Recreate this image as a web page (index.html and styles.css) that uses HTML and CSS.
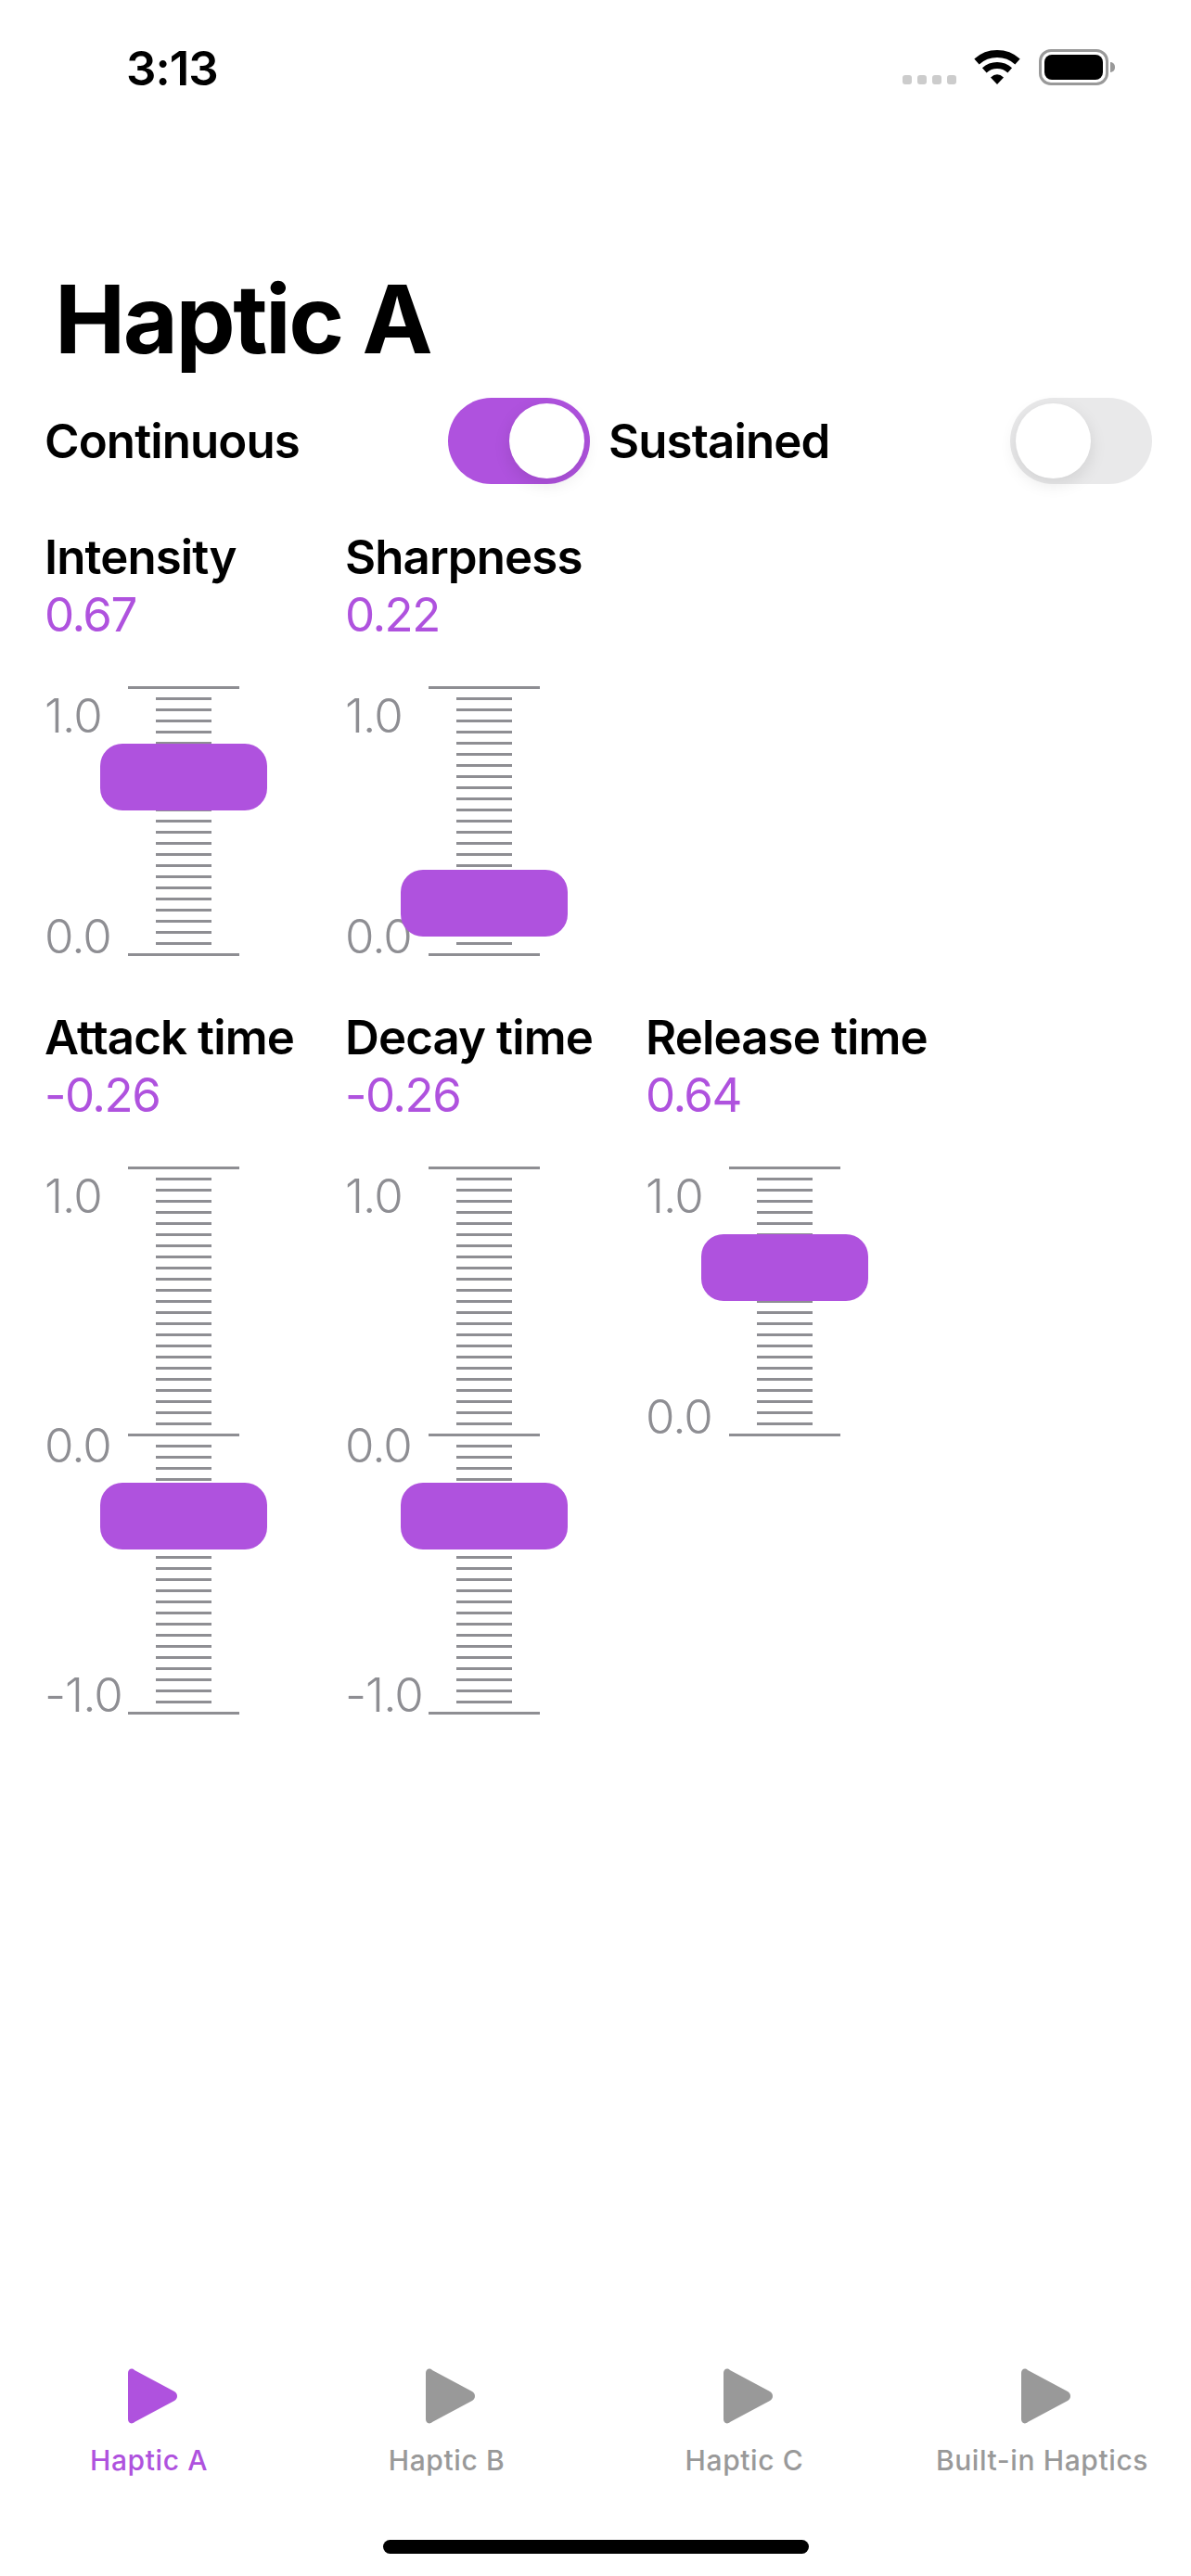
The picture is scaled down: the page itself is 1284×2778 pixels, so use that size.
FILE: index.html
```html
<!DOCTYPE html>
<html lang="en">
<head>
    <meta charset="UTF-8">
    <title>Haptic A</title>
    <link rel="stylesheet" href="styles.css">
</head>
<body>
    <div class="app">
        <div class="status-bar">
            <span class="time">3:13</span>
            <div class="status-icons">
                <div class="signal"><i></i><i></i><i></i><i></i></div>
                <svg class="wifi" width="50" height="37" viewBox="0 0 50 37">
                    <path d="M3 12.5A33 33 0 0 1 47 12.5" fill="none" stroke="#000" stroke-width="8"/>
                    <path d="M11.3 21.8A20.5 20.5 0 0 1 38.7 21.8" fill="none" stroke="#000" stroke-width="7"/>
                    <path d="M25 37L18 29.5Q25 23 32 29.5Z" fill="#000"/>
                </svg>
                <div class="battery"><div class="battery-level"></div></div>
                <div class="battery-cap"></div>
            </div>
        </div>

        <h1 class="title">Haptic A</h1>

        <div class="switches">
            <div class="switch-row">
                <span>Continuous</span>
                <div class="toggle on"><div class="knob"></div></div>
            </div>
            <div class="switch-row">
                <span>Sustained</span>
                <div class="toggle"><div class="knob"></div></div>
            </div>
        </div>

        <div class="slider-row">
            <div class="slider">
                <div class="name">Intensity</div>
                <div class="value">0.67</div>
                <div class="scale">
                    <div class="labels"><span>1.0</span><span>0.0</span></div>
                    <div class="track"><div class="thumb" style="top: 62px"></div></div>
                </div>
            </div>
            <div class="slider">
                <div class="name">Sharpness</div>
                <div class="value">0.22</div>
                <div class="scale">
                    <div class="labels"><span>1.0</span><span>0.0</span></div>
                    <div class="track"><div class="thumb" style="top: 198px"></div></div>
                </div>
            </div>
        </div>

        <div class="slider-row">
            <div class="slider">
                <div class="name">Attack time</div>
                <div class="value">-0.26</div>
                <div class="scale">
                    <div class="labels"><span>1.0</span><span>0.0</span><span>-1.0</span></div>
                    <div class="track tall"><div class="thumb" style="top: 341px"></div></div>
                </div>
            </div>
            <div class="slider">
                <div class="name">Decay time</div>
                <div class="value">-0.26</div>
                <div class="scale">
                    <div class="labels"><span>1.0</span><span>0.0</span><span>-1.0</span></div>
                    <div class="track tall"><div class="thumb" style="top: 341px"></div></div>
                </div>
            </div>
            <div class="slider">
                <div class="name">Release time</div>
                <div class="value">0.64</div>
                <div class="scale">
                    <div class="labels"><span>1.0</span><span>0.0</span></div>
                    <div class="track"><div class="thumb" style="top: 73px"></div></div>
                </div>
            </div>
        </div>

        <div class="tab-bar">
            <div class="tab active">
                <svg width="61" height="60" viewBox="0 0 61 60"><path d="M8 5C8 1 12 -1 15 2L58 25C62 27.5 62 32.5 58 35L15 58C12 61 8 59 8 55Z"/></svg>
                <span>Haptic A</span>
            </div>
            <div class="tab">
                <svg width="61" height="60" viewBox="0 0 61 60"><path d="M8 5C8 1 12 -1 15 2L58 25C62 27.5 62 32.5 58 35L15 58C12 61 8 59 8 55Z"/></svg>
                <span>Haptic B</span>
            </div>
            <div class="tab">
                <svg width="61" height="60" viewBox="0 0 61 60"><path d="M8 5C8 1 12 -1 15 2L58 25C62 27.5 62 32.5 58 35L15 58C12 61 8 59 8 55Z"/></svg>
                <span>Haptic C</span>
            </div>
            <div class="tab">
                <svg width="61" height="60" viewBox="0 0 61 60"><path d="M8 5C8 1 12 -1 15 2L58 25C62 27.5 62 32.5 58 35L15 58C12 61 8 59 8 55Z"/></svg>
                <span>Built-in Haptics</span>
            </div>
        </div>
        <div class="home-bar"></div>
    </div>
</body>
</html>
```

FILE: styles.css
```css
* {
    box-sizing: border-box;
}

body {
    margin: 0;
    background: #fff;
    color: #000;
    font-family: Inter, "Noto Sans", sans-serif;
}

.app {
    width: 1284px;
    height: 2778px;
    display: flex;
    flex-direction: column;
    overflow: hidden;
}

/* status bar */
.status-bar {
    height: 284px;
    padding: 53px 82px 0 136px;
    display: flex;
    justify-content: space-between;
    align-items: flex-start;
}

.time {
    font-size: 51px;
    font-weight: 600;
    line-height: 42px;
    letter-spacing: -1px;
}

.status-icons {
    display: flex;
    align-items: flex-start;
}

.signal {
    display: flex;
    gap: 6px;
    margin: 28px 19px 0 0;
}

.signal i {
    width: 10px;
    height: 10px;
    border-radius: 3px;
    background: #ccc;
}

.wifi {
    margin: 1px 20px 0 0;
}

.battery {
    width: 75px;
    height: 39px;
    padding: 3px;
    border: 3px solid #999;
    border-radius: 13px;
}

.battery-level {
    width: 100%;
    height: 100%;
    background: #000;
    border-radius: 8px;
}

.battery-cap {
    width: 5px;
    height: 11px;
    margin: 14px 0 0 2px;
    background: #999;
    border-radius: 0 6px 6px 0;
}

/* title and switches */
.title {
    margin: 0;
    padding-left: 59px;
    font-size: 102px;
    font-weight: 700;
    line-height: 120px;
    letter-spacing: -2.5px;
}

.switches {
    margin-top: 25px;
    padding-left: 48px;
    display: flex;
    gap: 20px;
}

.switch-row {
    width: 588px;
    display: flex;
    justify-content: space-between;
    align-items: center;
    font-size: 51px;
    font-weight: 600;
    letter-spacing: -0.9px;
}

.switch-row + .switch-row {
    width: 586px;
}

.toggle {
    width: 153px;
    height: 93px;
    padding: 6px;
    border-radius: 47px;
    background: #e9e9ea;
    display: flex;
}

.toggle.on {
    background: #af52de;
    justify-content: flex-end;
}

.knob {
    width: 81px;
    height: 81px;
    border-radius: 50%;
    background: #fff;
    box-shadow: 0 6px 18px rgba(0, 0, 0, 0.1);
}

/* sliders */
.slider-row {
    margin-top: 58px;
    padding-left: 48px;
    display: flex;
}

.switches + .slider-row {
    margin-top: 49px;
}

.slider {
    width: 324px;
}

.name, .value {
    font-size: 51px;
    line-height: 60px;
    white-space: nowrap;
}

.name {
    font-weight: 600;
    letter-spacing: -0.9px;
}

.value {
    margin-top: 2px;
    color: #af52de;
    font-weight: 400;
    letter-spacing: -1.5px;
}

.scale {
    margin-top: 47px;
    display: flex;
}

.labels {
    width: 90px;
    margin-bottom: -9px;
    padding-top: 2px;
    display: flex;
    flex-direction: column;
    justify-content: space-between;
    color: #8e8e93;
    font-size: 51px;
    font-weight: 300;
    line-height: 60px;
    letter-spacing: -1px;
    white-space: nowrap;
}

.track {
    position: relative;
    width: 120px;
    height: 291px;
    background:
        linear-gradient(#8e8e93, #8e8e93) top / 100% 3px no-repeat,
        linear-gradient(#8e8e93, #8e8e93) bottom / 100% 3px no-repeat,
        repeating-linear-gradient(#8e8e93 0 3px, transparent 3px 12px) center / 60px 100% no-repeat;
}

.track.tall {
    height: 591px;
    background:
        linear-gradient(#8e8e93, #8e8e93) top / 100% 3px no-repeat,
        linear-gradient(#8e8e93, #8e8e93) 0 288px / 100% 3px no-repeat,
        linear-gradient(#8e8e93, #8e8e93) bottom / 100% 3px no-repeat,
        repeating-linear-gradient(#8e8e93 0 3px, transparent 3px 12px) center / 60px 100% no-repeat;
}

.thumb {
    position: absolute;
    left: -30px;
    width: 180px;
    height: 72px;
    border-radius: 24px;
    background: #af52de;
}

/* tab bar */
.tab-bar {
    margin-top: auto;
    display: flex;
}

.tab {
    width: 321px;
    display: flex;
    flex-direction: column;
    align-items: center;
    color: #999;
    font-size: 30px;
    font-weight: 500;
    line-height: 36px;
    letter-spacing: 0.6px;
    fill: #999;
}

.tab.active {
    color: #af52de;
    fill: #af52de;
}

.tab svg {
    margin-bottom: 21px;
    display: block;
}

.home-bar {
    width: 459px;
    height: 15px;
    margin: 68px auto 24px;
    border-radius: 8px;
    background: #000;
}
```
